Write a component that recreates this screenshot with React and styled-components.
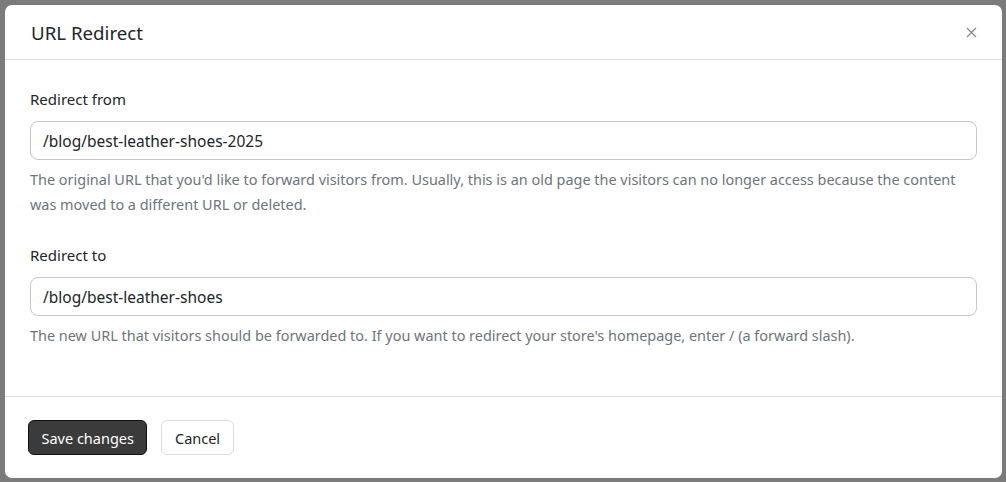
import styled, { createGlobalStyle } from 'styled-components';

const GlobalStyle = createGlobalStyle`
	html, body {
		margin: 0;
		padding: 0;
	}
	body {
		font-family: "Noto Sans", "Open Sans", Arial, sans-serif;
		color: #212529;
	}
`;

const Backdrop = styled.div`
	width: 1006px;
	height: 482px;
	box-sizing: border-box;
	padding: 5px 4px 4px 5px;
	background-color: #7b7b7b;
	overflow: hidden;
`;

const Modal = styled.div`
	display: flex;
	flex-direction: column;
	height: 100%;
	background-color: #fff;
	border-radius: 7px;
	overflow: hidden;
`;

const Header = styled.div`
	display: flex;
	align-items: center;
	justify-content: space-between;
	height: 58px;
	padding: 0 24px 0 26px;
	border-bottom: 1px solid #dedede;
`;

const Title = styled.h2`
	margin: 0;
	font-size: 18.7px;
	font-weight: 400;
	color: #212529;
`;

const CloseButton = styled.button`
	display: flex;
	align-items: center;
	justify-content: center;
	width: 14px;
	height: 14px;
	padding: 0;
	border: none;
	background: none;
	cursor: pointer;
`;

const Body = styled.div`
	display: flex;
	flex-direction: column;
	gap: 26px;
	padding: 27px 25px 48px 25px;
	border-bottom: 1px solid #dedede;
`;

const Field = styled.div`
	display: flex;
	flex-direction: column;
`;

const Label = styled.label`
	font-size: 15px;
	line-height: 24px;
	margin-bottom: 10px;
	color: #212529;
`;

const Input = styled.input`
	box-sizing: border-box;
	height: 39px;
	padding: 0 12px;
	border: 1px solid #c3c6cb;
	border-radius: 8px;
	font-family: inherit;
	font-size: 15.5px;
	color: #212529;
	outline: none;
`;

const Help = styled.p`
	margin: 7px 0 0;
	font-size: 14.45px;
	line-height: 25px;
	color: #6c757d;
`;

const Footer = styled.div`
	display: flex;
	align-items: center;
	gap: 14px;
	padding: 23px;
`;

const Button = styled.button`
	box-sizing: border-box;
	height: 35px;
	padding: 0 12.5px;
	border-radius: 6px;
	font-family: inherit;
	font-size: 14.5px;
	cursor: pointer;
	border: 1px solid ${(p) => (p.$primary ? '#111' : '#dcdcdc')};
	background-color: ${(p) => (p.$primary ? '#3b3b3b' : '#fff')};
	color: ${(p) => (p.$primary ? '#fff' : '#212529')};
`;

export default function App() {
	return (
		<>
			<GlobalStyle />
			<Backdrop>
				<Modal>
					<Header>
						<Title>URL Redirect</Title>
						<CloseButton aria-label="Close">
							<svg width="11" height="11" viewBox="0 0 11 11">
								<path d="M1 1L10 10M10 1L1 10" stroke="#8a8a8a" strokeWidth="1.3" />
							</svg>
						</CloseButton>
					</Header>
					<Body>
						<Field>
							<Label>Redirect from</Label>
							<Input defaultValue="/blog/best-leather-shoes-2025" />
							<Help>
								The original URL that you'd like to forward visitors from. Usually, this is an old page the visitors can no longer access because the content was moved to a different URL or deleted.
							</Help>
						</Field>
						<Field>
							<Label>Redirect to</Label>
							<Input defaultValue="/blog/best-leather-shoes" />
							<Help>
								The new URL that visitors should be forwarded to. If you want to redirect your store's homepage, enter / (a forward slash).
							</Help>
						</Field>
					</Body>
					<Footer>
						<Button $primary>Save changes</Button>
						<Button>Cancel</Button>
					</Footer>
				</Modal>
			</Backdrop>
		</>
	);
}
